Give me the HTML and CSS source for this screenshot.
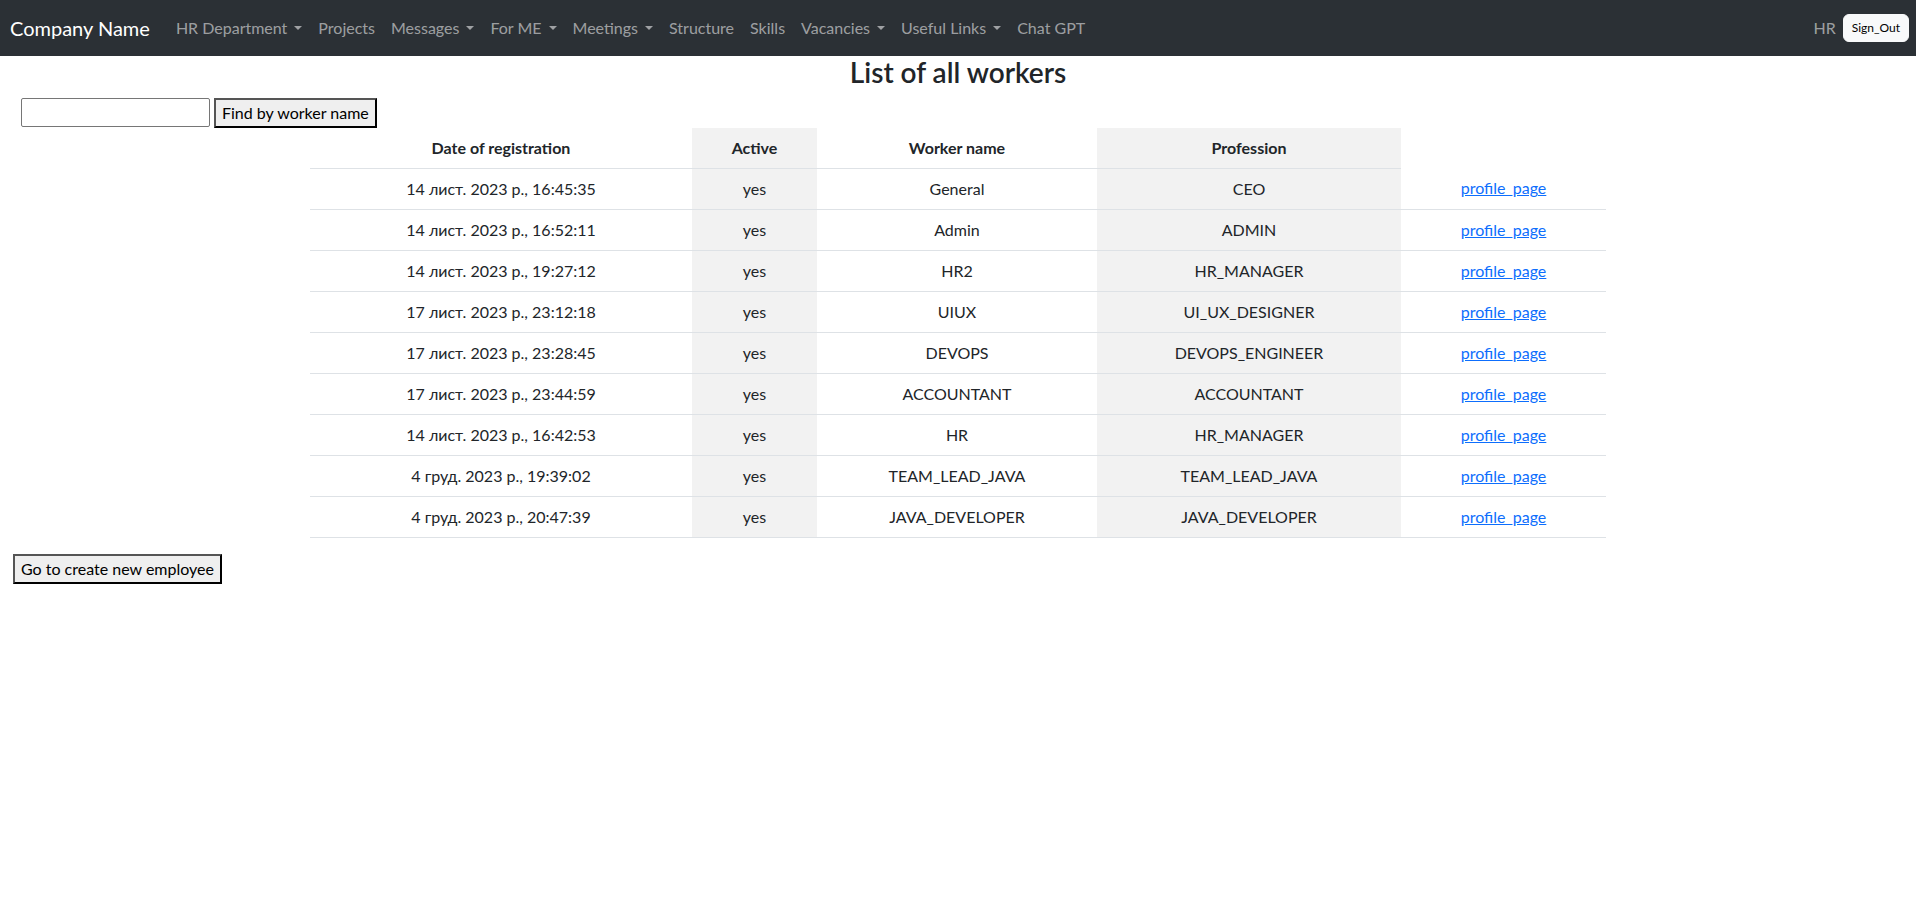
FILE: index.html
```html
<!DOCTYPE html>
<html lang="uk">
<head>
<meta charset="utf-8">
<title>List of all workers</title>
<link rel="stylesheet" href="styles.css">
</head>
<body>
<nav class="navbar">
  <div class="nav-inner">
    <a class="brand" href="#">Company Name</a>
    <ul class="nav-list">
      <li><a class="nav-link toggle" href="#">HR Department</a></li>
      <li><a class="nav-link" href="#">Projects</a></li>
      <li><a class="nav-link toggle" href="#">Messages</a></li>
      <li><a class="nav-link toggle" href="#">For ME</a></li>
      <li><a class="nav-link toggle" href="#">Meetings</a></li>
      <li><a class="nav-link" href="#">Structure</a></li>
      <li><a class="nav-link" href="#">Skills</a></li>
      <li><a class="nav-link toggle" href="#">Vacancies</a></li>
      <li><a class="nav-link toggle" href="#">Useful Links</a></li>
      <li><a class="nav-link" href="#">Chat GPT</a></li>
    </ul>
    <div class="user-box">
      <span class="user-name">HR</span>
      <button class="btn-signout" type="button">Sign_Out</button>
    </div>
  </div>
</nav>

<h3 class="page-title">List of all workers</h3>

<form class="search-form">
  <input class="search-input" type="text"> <button class="plain-btn" type="button">Find by worker name</button>
</form>

<div class="container">
  <table class="workers">
    <colgroup>
      <col class="c1"><col class="c2"><col class="c3"><col class="c4"><col class="c5">
    </colgroup>
    <thead>
      <tr>
        <th>Date of registration</th>
        <th>Active</th>
        <th>Worker name</th>
        <th>Profession</th>
      </tr>
    </thead>
    <tbody>
      <tr><td>14 лист. 2023 р., 16:45:35</td><td>yes</td><td>General</td><td>CEO</td><td><a href="#">profile_page</a></td></tr>
      <tr><td>14 лист. 2023 р., 16:52:11</td><td>yes</td><td>Admin</td><td>ADMIN</td><td><a href="#">profile_page</a></td></tr>
      <tr><td>14 лист. 2023 р., 19:27:12</td><td>yes</td><td>HR2</td><td>HR_MANAGER</td><td><a href="#">profile_page</a></td></tr>
      <tr><td>17 лист. 2023 р., 23:12:18</td><td>yes</td><td>UIUX</td><td>UI_UX_DESIGNER</td><td><a href="#">profile_page</a></td></tr>
      <tr><td>17 лист. 2023 р., 23:28:45</td><td>yes</td><td>DEVOPS</td><td>DEVOPS_ENGINEER</td><td><a href="#">profile_page</a></td></tr>
      <tr><td>17 лист. 2023 р., 23:44:59</td><td>yes</td><td>ACCOUNTANT</td><td>ACCOUNTANT</td><td><a href="#">profile_page</a></td></tr>
      <tr><td>14 лист. 2023 р., 16:42:53</td><td>yes</td><td>HR</td><td>HR_MANAGER</td><td><a href="#">profile_page</a></td></tr>
      <tr><td>4 груд. 2023 р., 19:39:02</td><td>yes</td><td>TEAM_LEAD_JAVA</td><td>TEAM_LEAD_JAVA</td><td><a href="#">profile_page</a></td></tr>
      <tr><td>4 груд. 2023 р., 20:47:39</td><td>yes</td><td>JAVA_DEVELOPER</td><td>JAVA_DEVELOPER</td><td><a href="#">profile_page</a></td></tr>
    </tbody>
  </table>
</div>

<div class="create-row">
  <button class="plain-btn" type="button">Go to create new employee</button>
</div>
</body>
</html>
```

FILE: styles.css
```css
* { box-sizing: border-box; }

html, body {
  margin: 0;
  padding: 0;
}

body {
  font-family: "Lato", "Noto Sans", sans-serif;
  font-size: 16px;
  line-height: 1.5;
  color: #212529;
  background: #fff;
}

/* Navbar */
.navbar {
  background: #2b3035;
  padding: 8px 0;
}

.nav-inner {
  display: flex;
  align-items: center;
  padding: 0 7px 0 10px;
}

.brand {
  font-size: 20px;
  line-height: 30px;
  padding: 5px 0;
  margin-right: 18px;
  color: #fff;
  text-decoration: none;
}

.nav-list {
  display: flex;
  list-style: none;
  margin: 0;
  padding: 0;
  flex: 1;
}

.nav-link {
  display: block;
  padding: 8px;
  color: rgba(255, 255, 255, 0.55);
  text-decoration: none;
  line-height: 24px;
}

.nav-link.toggle::after {
  content: "";
  display: inline-block;
  margin-left: 7px;
  vertical-align: 0.255em;
  border-top: 0.3em solid;
  border-right: 0.3em solid transparent;
  border-left: 0.3em solid transparent;
  border-bottom: 0;
}

.user-box {
  display: flex;
  align-items: center;
  gap: 7px;
}

.user-name {
  color: rgba(255, 255, 255, 0.55);
}

.btn-signout {
  font-family: inherit;
  font-size: 12px;
  line-height: 18px;
  padding: 4px 8px;
  border: 1px solid #f8f9fa;
  border-radius: 6px;
  background: #f8f9fa;
  color: #000;
}

/* Heading */
.page-title {
  margin: 0 0 8px;
  text-align: center;
  font-size: 28px;
  font-weight: 600;
  line-height: 1.2;
}

/* Search form */
.search-form {
  margin: 0;
  padding-left: 21px;
  height: 30px;
  display: flex;
  align-items: flex-start;
  gap: 4px;
}

.search-input {
  width: 189px;
  height: 29px;
  font-family: inherit;
  font-size: 16px;
  border: 1px solid #767676;
  border-radius: 2px;
  padding: 1px 2px;
}

.plain-btn {
  font-family: inherit;
  font-size: 16px;
  line-height: 24px;
  padding: 1px 6px;
  background: #efefef;
  color: #000;
  border-width: 2px;
  border-style: solid;
  border-color: #555 #000 #000 #555;
  border-radius: 0;
}

/* Table */
.container {
  width: 1320px;
  margin: 0 auto;
  padding: 0 12px;
}

.workers {
  width: 1296px;
  border-collapse: collapse;
  table-layout: fixed;
  margin-bottom: 16px;
  text-align: center;
}

.c1 { width: 382px; }
.c2 { width: 125px; }
.c3 { width: 280px; }
.c4 { width: 304px; }
.c5 { width: 205px; }

.workers th,
.workers td {
  padding: 8px;
  border-bottom: 1px solid #dee2e6;
  line-height: 24px;
}

.workers th {
  font-weight: 700;
}

.workers th:nth-child(even),
.workers td:nth-child(even) {
  background: #f2f2f2;
}

.workers a {
  color: #0d6efd;
  text-decoration: underline;
}

.create-row {
  padding-left: 13px;
}
```
